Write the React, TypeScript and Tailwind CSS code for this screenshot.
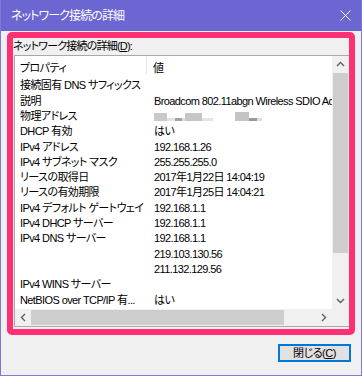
import React from 'react';

const rows: { name: string; value: string }[] = [
  { name: '接続固有 DNS サフィックス', value: '' },
  { name: '説明', value: 'Broadcom 802.11abgn Wireless SDIO Adapter' },
  { name: '物理アドレス', value: '__mac__' },
  { name: 'DHCP 有効', value: 'はい' },
  { name: 'IPv4 アドレス', value: '192.168.1.26' },
  { name: 'IPv4 サブネット マスク', value: '255.255.255.0' },
  { name: 'リースの取得日', value: '2017年1月22日 14:04:19' },
  { name: 'リースの有効期限', value: '2017年1月25日 14:04:21' },
  { name: 'IPv4 デフォルト ゲートウェイ', value: '192.168.1.1' },
  { name: 'IPv4 DHCP サーバー', value: '192.168.1.1' },
  { name: 'IPv4 DNS サーバー', value: '192.168.1.1' },
  { name: '', value: '219.103.130.56' },
  { name: '', value: '211.132.129.56' },
  { name: 'IPv4 WINS サーバー', value: '' },
  { name: 'NetBIOS over TCP/IP 有...', value: 'はい' },
];

// blurred MAC address, drawn as grey blocks
const MacBlur = () => (
  <div className="flex items-end h-[10px]">
    <div className="w-[13px] h-[8px] bg-[#c9c9c9]" />
    <div className="w-[8px] h-[3px] bg-[#e2e2e2]" />
    <div className="w-[7px] h-[3px] bg-[#a3a3a3]" />
    <div className="w-[3px] h-[3px] bg-[#dedede]" />
    <div className="w-[17px] h-[8px] bg-[#c6c6c6]" />
    <div className="w-[11px] h-[3px] bg-[#e4e4e4]" />
    <div className="w-[22px] h-[3px] bg-transparent" />
    <div className="w-[14px] h-[9px] bg-[#c4c4c4]" />
    <div className="w-[8px] h-[3px] bg-[#9a9a9a]" />
    <div className="w-[5px] h-[3px] bg-[#dddddd]" />
  </div>
);

const Chevron = ({ dir }: { dir: 'up' | 'down' | 'left' | 'right' }) => {
  const d = {
    up: 'M1 6 L4.5 2.5 L8 6',
    down: 'M1 3 L4.5 6.5 L8 3',
    left: 'M6 1 L2.5 4.5 L6 8',
    right: 'M3 1 L6.5 4.5 L3 8',
  }[dir];
  return (
    <svg width="9" height="9" viewBox="0 0 9 9">
      <path d={d} fill="none" stroke="#606060" strokeWidth="1.4" />
    </svg>
  );
};

export default function App() {
  const font = "font-['Liberation_Sans','Noto_Sans_CJK_JP',sans-serif] [font-feature-settings:'palt']";
  return (
    <div className={`w-[362px] h-[376px] flex flex-col bg-[#f0f0f0] border-x border-b border-[#7d79d6] text-black ${font}`}>
      {/* title bar */}
      <div className="h-[31px] shrink-0 bg-[#6b66d2] flex items-center justify-between pl-[10px] pr-[10px]">
        <span className="text-white text-[12px] tracking-[-0.9px]">ネットワーク接続の詳細</span>
        <svg width="11" height="11" viewBox="0 0 11 11">
          <path d="M0.5 0.5 L10.5 10.5 M10.5 0.5 L0.5 10.5" stroke="white" strokeWidth="1" />
        </svg>
      </div>

      <div className="px-[6px] pt-[1px]">
        <div className="h-[303px] border-[6px] border-[#ff2f73] rounded-[5px] flex flex-col">
          <div className="h-[17px] flex items-center text-[11px] leading-none tracking-[-0.8px]">
            ネットワーク接続の詳細(<span className="underline">D</span>):
          </div>
          <div className="ml-[1px] h-[272px] flex flex-col border-l border-t border-b border-[#a9a9a9] bg-white">
            <div className="flex-1 flex min-h-0">
              <div className="flex-1 flex flex-col overflow-hidden text-[11px] tracking-[-0.6px]">
                <div className="h-[22px] flex items-start pt-[4px]">
                  <div className="w-[132px] pl-[5px] border-r border-[#e5e5e5] h-[18px] -mt-[4px] pt-[4px]">プロパティ</div>
                  <div className="pl-[6px]">値</div>
                </div>
                {rows.map((r, i) => (
                  <div key={i} className="h-[15.3px] flex items-center whitespace-nowrap">
                    <div className="w-[132px] pl-[5px] shrink-0">{r.name}</div>
                    <div className="pl-[7px]">{r.value === '__mac__' ? <MacBlur /> : r.value}</div>
                  </div>
                ))}
              </div>
              {/* vertical scrollbar */}
              <div className="w-[17px] shrink-0 flex flex-col bg-[#f0f0f0]">
                <div className="h-[17px] flex items-center justify-center"><Chevron dir="up" /></div>
                <div className="mx-[1px] h-[180px] bg-[#cdcdcd]" />
                <div className="flex-1" />
                <div className="h-[17px] flex items-center justify-center"><Chevron dir="down" /></div>
              </div>
            </div>
            {/* horizontal scrollbar */}
            <div className="h-[17px] shrink-0 flex">
              <div className="flex-1 flex items-center bg-[#f0f0f0]">
                <div className="w-[16px] flex justify-center"><Chevron dir="left" /></div>
                <div className="w-[253px] h-[15px] bg-[#cdcdcd]" />
                <div className="flex-1" />
                <div className="w-[17px] flex justify-center"><Chevron dir="right" /></div>
              </div>
              <div className="w-[17px] bg-[#f0f0f0]" />
            </div>
          </div>
        </div>
      </div>

      <div className="flex justify-end pr-[10px] pt-[9px]">
        <button className="w-[73px] h-[18px] border-2 border-[#0078d7] bg-[#e1e1e1] text-[11px] leading-none tracking-[-0.5px] flex items-center justify-center">
          閉じる(<span className="underline">C</span>)
        </button>
      </div>
    </div>
  );
}
